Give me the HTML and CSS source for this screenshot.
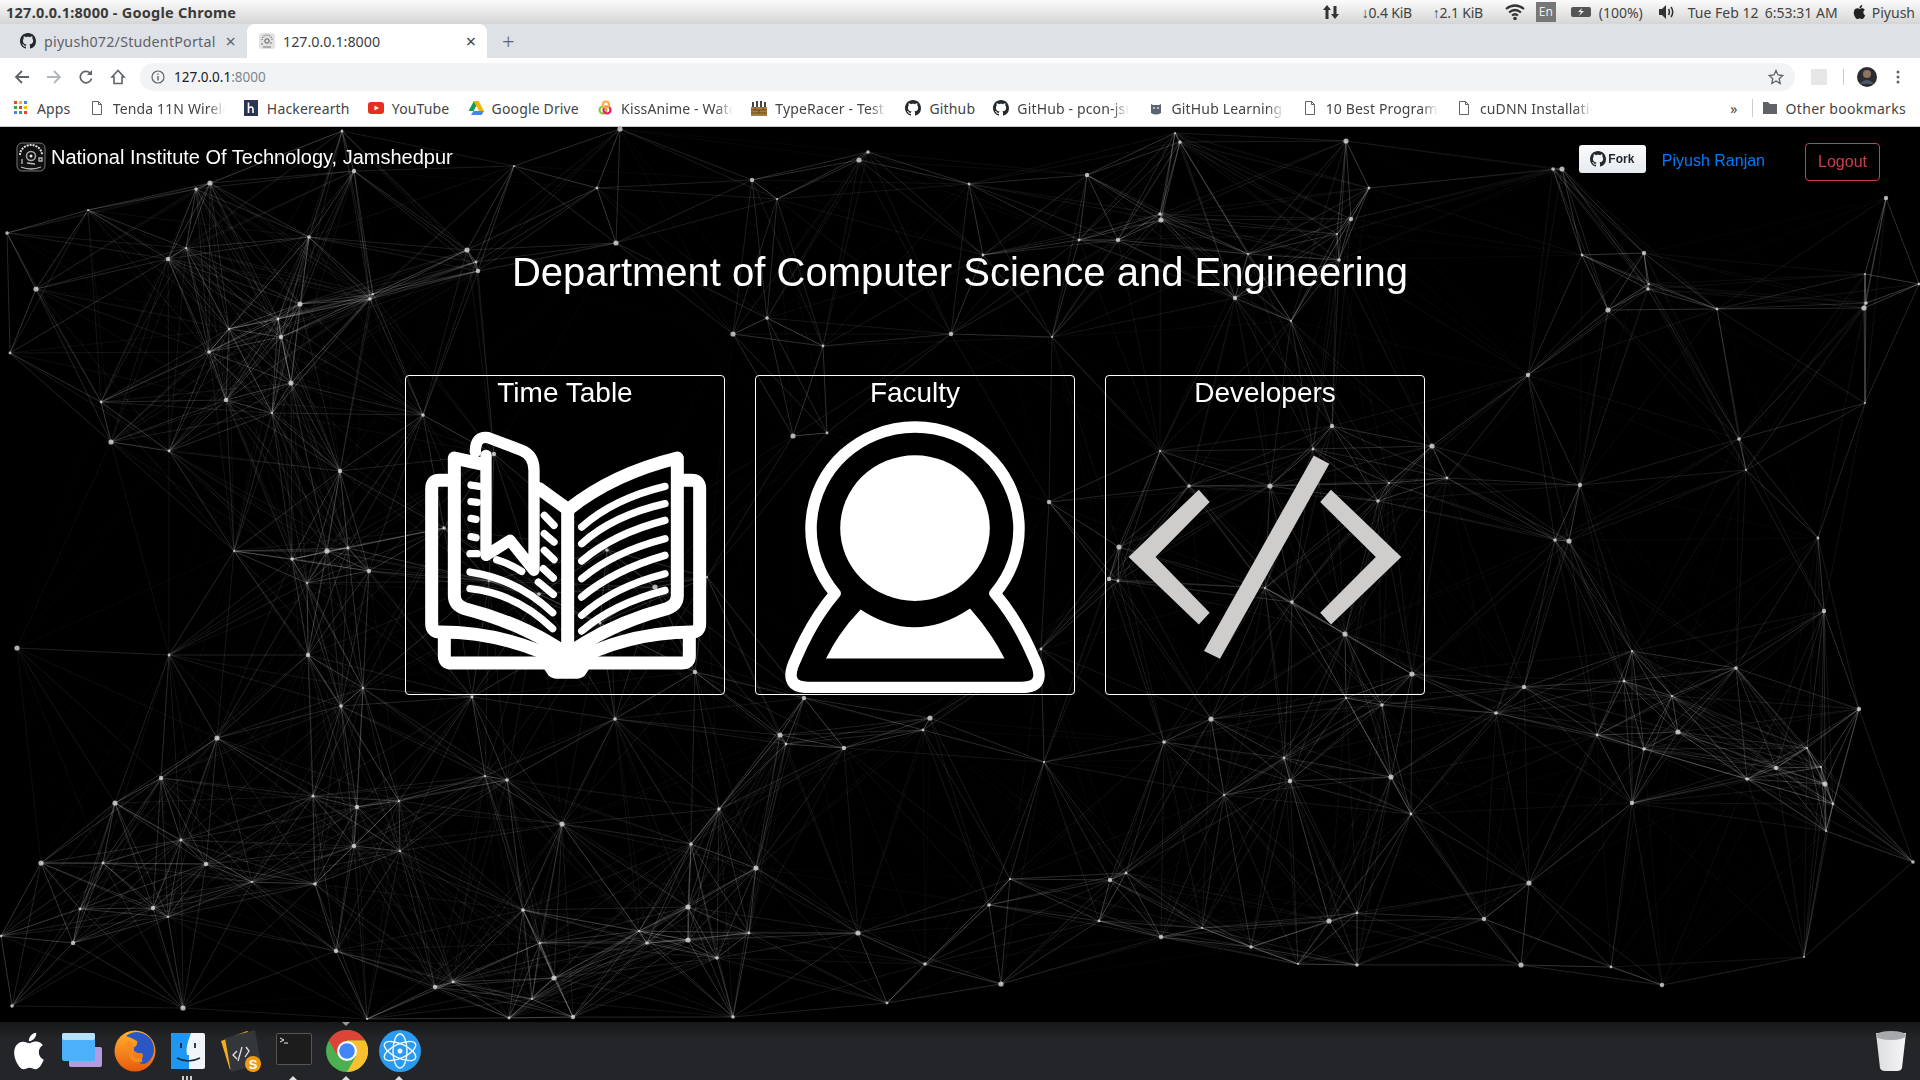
FILE: index.html
```html
<!DOCTYPE html>
<html lang="en">

<head>
    <meta charset="UTF-8">
    <title>National Institute Of Technology, Jamshedpur</title>
    <link rel="stylesheet" href="styles.css">
</head>

<body>
    <svg class="defs" width="0" height="0">
        <symbol id="gh" viewBox="0 0 16 16">
            <path d="M8 0C3.58 0 0 3.58 0 8c0 3.54 2.29 6.53 5.47 7.59.4.07.55-.17.55-.38 0-.19-.01-.82-.01-1.49-2.01.37-2.53-.49-2.69-.94-.09-.23-.48-.94-.82-1.13-.28-.15-.68-.52-.01-.53.63-.01 1.08.58 1.23.82.72 1.21 1.87.87 2.33.66.07-.52.28-.87.51-1.07-1.78-.2-3.64-.89-3.64-3.95 0-.87.31-1.59.82-2.15-.08-.2-.36-1.02.08-2.12 0 0 .67-.21 2.2.82.64-.18 1.32-.27 2-.27.68 0 1.36.09 2 .27 1.53-1.04 2.2-.82 2.2-.82.44 1.1.16 1.92.08 2.12.51.56.82 1.27.82 2.15 0 3.07-1.87 3.75-3.65 3.95.29.25.54.73.54 1.48 0 1.07-.01 1.93-.01 2.2 0 .21.15.46.55.38A8.013 8.013 0 0016 8c0-4.42-3.58-8-8-8z"/>
        </symbol>
        <symbol id="apple" viewBox="0 0 24 24">
            <path d="M18.71 19.5c-.83 1.24-1.71 2.45-3.05 2.47-1.34.03-1.77-.79-3.29-.79-1.53 0-2 .77-3.27.82-1.31.05-2.3-1.32-3.14-2.53C4.25 17 2.94 12.45 4.7 9.39c.87-1.52 2.43-2.48 4.12-2.51 1.28-.02 2.5.87 3.29.87.78 0 2.26-1.07 3.81-.91.65.03 2.47.26 3.64 1.98-.09.06-2.17 1.28-2.15 3.81.03 3.02 2.65 4.03 2.68 4.04-.03.07-.42 1.44-1.38 2.83M13 3.5c.73-.83 1.94-1.46 2.94-1.5.13 1.17-.34 2.35-1.04 3.19-.69.85-1.83 1.51-2.95 1.42-.15-1.15.41-2.35 1.05-3.11z"/>
        </symbol>
        <symbol id="file" viewBox="0 0 16 16">
            <path d="M3.5 1.5h6l3 3v10h-9z M9.5 1.5v3h3" fill="none" stroke="#5f6368" stroke-width="1"/>
        </symbol>
        <symbol id="emblem" viewBox="0 0 30 30">
            <rect x="1" y="1" width="28" height="28" rx="5" fill="#111" stroke="#777"/>
            <path d="M4 13a11 10 0 0 1 22 0" fill="none" stroke="#ddd" stroke-width="2" stroke-dasharray="2 1"/>
            <circle cx="15" cy="14" r="4.5" fill="none" stroke="#aaa" stroke-width="1.5"/>
            <circle cx="15" cy="14" r="1.5" fill="#eee"/>
            <path d="M6 17v5M23 16h3v3h-3zM11 21l8 1M5 25q10 4 20 0" fill="none" stroke="#bbb" stroke-width="1.3"/>
        </symbol>
        <symbol id="favicon" viewBox="0 0 16 16">
            <rect width="16" height="16" rx="3" fill="#e2e2e2"/>
            <path d="M3 7a5 5 0 0 1 10 0" fill="none" stroke="#666" stroke-width="1.2" stroke-dasharray="1 1"/>
            <circle cx="8" cy="8" r="2.200" fill="none" stroke="#555"/>
            <path d="M3 10v2M12 9v2M4 14h8" stroke="#777"/>
        </symbol>
    </svg>

    <!-- ubuntu top bar -->
    <div class="os-bar">
        <span class="os-title">127.0.0.1:8000 - Google Chrome</span>
        <div class="os-status">
            <svg class="s-arrows" width="18" height="18" viewBox="0 0 18 18"><path d="M5 2l4 5H6.500v9h-3V7H1zM13 16l4-5h-2.500V3h-3v8H9z" fill="#333"/></svg>
            <span class="s-net">↓0.4 KiB</span>
            <span class="s-net">↑2.1 KiB</span>
            <svg width="22" height="18" viewBox="0 0 22 18"><path d="M2 6q9-7 18 0M5 9.500q6-5 12 0M8 12.500q3-2.500 6 0" fill="none" stroke="#333" stroke-width="2.200"/><circle cx="11" cy="15.500" r="1.800" fill="#333"/></svg>
            <span class="s-lang">En</span>
            <svg class="s-batt" width="20" height="14" viewBox="0 0 20 14"><rect x="0" y="2" width="20" height="10" rx="2" fill="#555"/><path d="M11 3l-4 4h3l-2 4 5-5h-3z" fill="#eee"/></svg>
            <span class="s-pct">(100%)</span>
            <svg width="18" height="18" viewBox="0 0 18 18"><path d="M1 6h3l4-4v14l-4-4H1z" fill="#333"/><path d="M10.500 6q2 3 0 6M13 4q3.500 5 0 10" fill="none" stroke="#333" stroke-width="1.500"/></svg>
            <span class="s-date">Tue Feb 12</span>
            <span class="s-time">6:53:31 AM</span>
            <svg class="s-apple" width="17" height="18" fill="#222"><use href="#apple"/></svg>
            <span>Piyush</span>
        </div>
    </div>

    <!-- tab strip -->
    <div class="tabs">
        <div class="tab">
            <svg width="16" height="16" fill="#24292e"><use href="#gh"/></svg>
            <span class="tab-text">piyush072/StudentPortal</span>
            <span class="tab-x">×</span>
        </div>
        <div class="tab tab-active">
            <svg width="16" height="16"><use href="#favicon"/></svg>
            <span class="tab-text">127.0.0.1:8000</span>
            <span class="tab-x">×</span>
        </div>
        <span class="tab-new">+</span>
    </div>

    <!-- address bar -->
    <div class="toolbar">
        <svg class="tb-btn" width="16" height="16" viewBox="0 0 16 16"><path d="M15 8H2M8 2L2 8l6 6" fill="none" stroke="#5f6368" stroke-width="1.800"/></svg>
        <svg class="tb-btn" width="16" height="16" viewBox="0 0 16 16"><path d="M1 8h13M8 2l6 6-6 6" fill="none" stroke="#b3b6ba" stroke-width="1.800"/></svg>
        <svg class="tb-btn" width="16" height="16" viewBox="0 0 16 16"><path d="M13.500 9.500A5.700 5.700 0 1 1 12 4" fill="none" stroke="#5f6368" stroke-width="1.700"/><path d="M14 1v5H9z" fill="#5f6368"/></svg>
        <svg class="tb-btn" width="16" height="16" viewBox="0 0 16 16"><path d="M8 1.500L2 8h2v6.500h8V8h2z" fill="none" stroke="#5f6368" stroke-width="1.600"/></svg>
        <div class="omnibox">
            <svg width="14" height="14" viewBox="0 0 14 14"><circle cx="7" cy="7" r="6" fill="none" stroke="#5f6368" stroke-width="1.200"/><path d="M7 6v4.500M7 3.500v1.300" stroke="#5f6368" stroke-width="1.400"/></svg>
            <span class="url">127.0.0.1<span class="url-port">:8000</span></span>
            <svg class="star" width="16" height="16" viewBox="0 0 16 16"><path d="M8 1.500l2 4.500 4.800.5-3.600 3.200 1 4.800L8 12l-4.200 2.500 1-4.800L1.200 6.500 6 6z" fill="none" stroke="#5f6368" stroke-width="1.300"/></svg>
        </div>
        <span class="ext-box"></span>
        <span class="tb-sep"></span>
        <svg class="avatar" width="20" height="20" viewBox="0 0 20 20"><circle cx="10" cy="10" r="10" fill="#2c2c30"/><circle cx="10" cy="7" r="4" fill="#8c7460"/><path d="M3 17q7-8 14 0" fill="#49586b"/></svg>
        <svg class="tb-menu" width="4" height="14" viewBox="0 0 4 14"><circle cx="2" cy="2" r="1.500" fill="#5f6368"/><circle cx="2" cy="7" r="1.500" fill="#5f6368"/><circle cx="2" cy="12" r="1.500" fill="#5f6368"/></svg>
    </div>

    <!-- bookmarks -->
    <div class="bookmarks">
        <div class="bm bm-apps">
            <svg width="16" height="16" viewBox="0 0 16 16">
                <path d="M1 1h3v3H1z" fill="#ea4335"/><path d="M6 1h3v3H6z" fill="#fbbc05"/><path d="M11 1h3v3h-3z" fill="#4285f4"/>
                <path d="M1 6h3v3H1z" fill="#34a853"/><path d="M6 6h3v3H6z" fill="#ea4335"/><path d="M11 6h3v3h-3z" fill="#fbbc05"/>
                <path d="M1 11h3v3H1z" fill="#4285f4"/><path d="M6 11h3v3H6z" fill="#34a853"/><path d="M11 11h3v3h-3z" fill="#ea4335"/>
            </svg>
            <span>Apps</span>
        </div>
        <div class="bm"><svg width="16" height="16"><use href="#file"/></svg><span class="bm-cut">Tenda 11N Wireless</span></div>
        <div class="bm">
            <svg width="16" height="16" viewBox="0 0 16 16"><rect x="1" width="14" height="16" fill="#2c3454"/><path d="M5.500 2.500V13M5.500 8q4-2.500 4.500 1V13" fill="none" stroke="#fff" stroke-width="1.600"/></svg>
            <span>Hackerearth</span>
        </div>
        <div class="bm">
            <svg width="16" height="16" viewBox="0 0 16 16"><rect y="2" width="16" height="12" rx="3" fill="#e62d1f"/><path d="M6.500 5.500v5L11 8z" fill="#fff"/></svg>
            <span>YouTube</span>
        </div>
        <div class="bm">
            <svg width="16" height="16" viewBox="0 0 16 16"><path d="M5.500 1h5L5 11H0z" fill="#0f9d58" transform="translate(.5 0)"/><path d="M10.500 1L16 11h-5L5.500 1z" fill="#f4b400"/><path d="M3 15l2.500-4H16l-2.500 4z" fill="#4285f4"/></svg>
            <span>Google Drive</span>
        </div>
        <div class="bm">
            <svg width="16" height="16" viewBox="0 0 16 16"><circle cx="6" cy="10" r="3.500" fill="none" stroke="#8cc63f" stroke-width="2.200"/><circle cx="10" cy="10" r="3.500" fill="none" stroke="#e91e63" stroke-width="2.200"/><circle cx="9" cy="4.500" r="3" fill="none" stroke="#fbb03b" stroke-width="2.200"/></svg>
            <span class="bm-cut">KissAnime - Watch</span>
        </div>
        <div class="bm">
            <svg width="16" height="16" viewBox="0 0 16 16"><rect y="7" width="16" height="9" fill="#a97b3c"/><path d="M0 10h16M0 13h16M4 7v3M8 10v3M12 7v3" stroke="#5c4018" stroke-width=".8"/><path d="M2 7V2M6 7V1M10 7V1M14 7V2" stroke="#444" stroke-width="2"/></svg>
            <span class="bm-cut">TypeRacer - Test your</span>
        </div>
        <div class="bm"><svg width="16" height="16" fill="#24292e"><use href="#gh"/></svg><span>Github</span></div>
        <div class="bm"><svg width="16" height="16" fill="#24292e"><use href="#gh"/></svg><span class="bm-cut">GitHub - pcon-jsr</span></div>
        <div class="bm">
            <svg width="16" height="16" viewBox="0 0 16 16"><path d="M3 4l2 1h6l2-1v9q-5 3-10 0z" fill="#5b6472"/><circle cx="6" cy="8" r="1" fill="#ddd"/><circle cx="10" cy="8" r="1" fill="#ddd"/></svg>
            <span class="bm-cut">GitHub Learning Lab</span>
        </div>
        <div class="bm"><svg width="16" height="16"><use href="#file"/></svg><span class="bm-cut">10 Best Programming</span></div>
        <div class="bm"><svg width="16" height="16"><use href="#file"/></svg><span class="bm-cut">cuDNN Installation</span></div>
        <div class="bm-right">
            <span class="bm-more">»</span>
            <span class="bm-sep"></span>
            <div class="bm bm-other">
                <svg width="16" height="16" viewBox="0 0 16 16"><path d="M1 2h5l2 2h7v10H1z" fill="#5f6368"/></svg>
                <span>Other bookmarks</span>
            </div>
        </div>
    </div>

    <!-- the page itself -->
    <div class="page">
        <canvas id="particles" width="1920" height="895"></canvas>
        <div class="content">
            <nav class="nav">
                <a class="brand">
                    <svg width="30" height="30"><use href="#emblem"/></svg>
                    <span>National Institute Of Technology, Jamshedpur</span>
                </a>
                <div class="nav-right">
                    <a class="fork"><svg width="16" height="16" fill="#24292e"><use href="#gh"/></svg>Fork</a>
                    <a class="user">Piyush Ranjan</a>
                    <a class="logout">Logout</a>
                </div>
            </nav>
            <h1 class="heading">Department of Computer Science and Engineering</h1>
            <div class="cards">
                <div class="card">
                    <h3>Time Table</h3>
                    <svg class="card-icon" viewBox="18 119 954 850" fill="none" stroke="#fff" stroke-linecap="round" stroke-linejoin="round">
                        <g stroke-width="39">
                            <path d="M133 800V858Q133 878 155 878H845Q868 878 868 858V800"/>
                            <path d="M140 330H118Q95 330 95 355V760Q95 785 120 785Q320 785 500 880"/>
                            <path d="M850 330H875Q899 330 899 355V760Q899 785 875 785Q680 785 505 880"/>
                            <path d="M240 280L163 263V675Q163 705 195 715Q370 760 500 850"/>
                            <path d="M505 417Q640 310 832 263V675Q832 705 800 715Q630 760 505 850"/>
                            <path d="M418 355L503 417V860"/>
                        </g>
                        <path d="M410 862H590L555 915Q545 925 530 925H470Q455 925 445 915Z" fill="#fff" stroke="none"/>
                        <path d="M226 245Q226 195 265 202L365 240Q402 255 402 300V600L330 510L258 555V255" stroke-width="34"/>
                        <g stroke-width="22">
                            <path d="M213 344L238 348M213 394L232 396M213 444L228 447M213 499L228 502M210 550L232 550"/>
                            <path d="M290 568Q330 580 365 603M210 605Q350 625 458 727M210 655Q350 670 458 775"/>
                            <path d="M433 435L462 465M433 490L462 515M433 540L462 568M430 595L460 623M415 635L460 672"/>
                            <path d="M545 470Q640 385 795 348M545 520Q640 435 795 400M545 572Q640 490 795 450M545 625Q640 545 795 505M545 680Q640 600 795 555M545 735Q640 650 795 610M545 782Q640 700 795 660"/>
                        </g>
                    </svg>
                </div>
                <div class="card">
                    <h3>Faculty</h3>
                    <svg class="card-icon" viewBox="756 409.600 318 283.400">
                        <path d="M835 593A104 101.500 0 1 1 995 593Q1018 620 1034 658C1042 674 1042 687 1022 687H808C788 687 788 674 796 658Q812 620 835 593Z" fill="#000" stroke="#fff" stroke-width="11.500" stroke-linejoin="round"/>
                        <ellipse cx="915" cy="527.700" rx="74.800" ry="72.800" fill="#fff"/>
                        <path d="M826 658Q840 630 860.600 609Q915 645 970 608Q990 630 1004.500 658Z" fill="#fff"/>
                    </svg>
                </div>
                <div class="card">
                    <h3>Developers</h3>
                    <svg class="card-icon" viewBox="1106 409.600 318 283.400" fill="#cfcccc">
                        <path d="M1198.800 489.300L1209.700 501.700L1155.500 556.700L1209.700 612.300L1198.800 624L1128.600 556.700Z"/>
                        <path d="M1331 489.300L1320.200 501.700L1375.800 556.700L1320.200 612.300L1331 624L1401.300 556.700Z"/>
                        <path d="M1313.700 455L1329.300 463.300L1220 658.300L1204 650.700Z"/>
                    </svg>
                </div>
            </div>
        </div>
    </div>

    <!-- dock -->
    <div class="dock">
        <svg class="dock-icon" viewBox="2.500 .5 19 23" fill="#fff"><use href="#apple" width="24" height="24"/></svg>
        <svg class="dock-icon" viewBox="0 0 42 42">
            <rect x="8" y="17" width="33" height="20" rx="2" fill="#b49ae0"/>
            <rect x="1" y="3" width="33" height="28" rx="2" fill="#4db0fb"/>
            <rect x="1" y="3" width="33" height="7" rx="2" fill="#b9e0fb"/>
        </svg>
        <svg class="dock-icon" viewBox="0 0 42 42">
            <defs><linearGradient id="ffx" x1="0" y1="0" x2="0" y2="1"><stop offset="0" stop-color="#ffb52e"/><stop offset="1" stop-color="#e8590c"/></linearGradient></defs>
            <circle cx="21" cy="21" r="20.500" fill="url(#ffx)"/>
            <path d="M12 6Q24-3 36 8Q44 20 36 30Q30 37 24 32Q31 28 28 23Q20 24 19 18Q24 16 23 11Q18 8 12 6Z" fill="#2b57c4"/>
            <path d="M14 12Q20 18 17 24Q18 32 28 30" fill="none" stroke="#f58a1f" stroke-width="4"/>
        </svg>
        <svg class="dock-icon" viewBox="0 0 42 42">
            <rect x="4" y="3" width="34" height="36" rx="2" fill="#f1f4f8"/>
            <path d="M6 3H24Q18 18 20 25H22V39H6Q4 39 4 37V5Q4 3 6 3Z" fill="#1f97f0"/>
            <path d="M14 13v5M28 13v5" stroke="#1b2b3a" stroke-width="1.800"/>
            <path d="M10 28Q21 34 33 28" fill="none" stroke="#1b2b3a" stroke-width="1.500"/>
        </svg>
        <svg class="dock-icon" viewBox="0 0 42 42">
            <path d="M1 11L27 1L32 4L10 40Z" fill="#f0b020"/>
            <path d="M5 8L35 0L41 34L11 42Z" fill="#33363b"/>
            <path d="M17 21L13 25L17 29M26 17L29 21L25 27M22 17L18 31" fill="none" stroke="#e4e4e4" stroke-width="1.300"/>
            <circle cx="33" cy="34" r="8" fill="#f39c12"/>
            <text x="33" y="38.500" class="dock-s">S</text>
        </svg>
        <svg class="dock-icon" viewBox="0 0 42 42">
            <rect x="3.500" y="3.500" width="35" height="31" rx="1.500" fill="#1c1c1c" stroke="#555"/>
            <path d="M7 8L11 10L7 12" fill="none" stroke="#eee"/>
            <path d="M11 13H15" stroke="#eee"/>
        </svg>
        <svg class="dock-icon" viewBox="0 0 42 42">
            <circle cx="21" cy="21" r="21" fill="#4caf50"/>
            <path d="M2.800 10.500A21 21 0 0 1 39.200 10.500H21L11.900 26.200Z" fill="#db4437"/>
            <path d="M39.200 10.500A21 21 0 0 1 21 42L30.100 26.200L21 10.500Z" fill="#fbc02d"/>
            <circle cx="21" cy="21" r="10" fill="#fff"/>
            <circle cx="21" cy="21" r="7.800" fill="#4285f4"/>
        </svg>
        <svg class="dock-icon" viewBox="0 0 42 42">
            <circle cx="21" cy="21" r="21" fill="#2b9bf0"/>
            <g fill="none" stroke="#f2f8ff" stroke-width="1.400">
                <ellipse cx="21" cy="21" rx="17" ry="7" transform="rotate(25 21 21)"/>
                <ellipse cx="21" cy="21" rx="17" ry="7" transform="rotate(-25 21 21)"/>
                <ellipse cx="21" cy="21" rx="17" ry="7" transform="rotate(90 21 21)"/>
            </g>
            <circle cx="21" cy="21" r="2.500" fill="#f2f8ff"/>
        </svg>
        <svg class="dock-icon dock-trash" viewBox="0 0 42 42">
            <defs><linearGradient id="trash" x1="0" y1="0" x2="1" y2="0"><stop offset="0" stop-color="#dcdde0"/><stop offset="1" stop-color="#f6f6f7"/></linearGradient></defs>
            <path d="M6 3H36L32 38Q31 41 27 41H15Q11 41 10 38Z" fill="url(#trash)"/>
            <ellipse cx="21" cy="5.500" rx="15" ry="4.500" fill="#a7a9ac"/>
        </svg>
        <span class="tri tri-top"></span>
        <span class="tri tri-term"></span>
        <span class="tri tri-chrome"></span>
        <span class="tri tri-atom"></span>
        <span class="dots"><i></i><i></i><i></i></span>
    </div>

    <script src="particles.js"></script>
</body>

</html>
```

FILE: styles.css
```css
* {
    margin: 0;
    padding: 0;
    box-sizing: border-box;
}

html, body {
    height: 1080px;
    overflow: hidden;
}

body {
    display: flex;
    flex-direction: column;
    background: #000;
    font-family: "Noto Sans", "Liberation Sans", sans-serif;
}

.defs {
    position: absolute;
}

/* os bar */
.os-bar {
    height: 24px;
    flex: none;
    display: flex;
    align-items: center;
    justify-content: space-between;
    padding: 0 5px 0 6px;
    background: linear-gradient(#fbfbfb, #d5d5d5);
    font-size: 14px;
    color: #444;
}

.os-title {
    font-size: 14.5px;
    font-weight: 700;
    letter-spacing: .25px;
    color: #3a3a3a;
}

.os-status {
    display: flex;
    align-items: center;
    white-space: nowrap;
}

.s-arrows { margin-right: 22px; }
.s-net { width: 71px; letter-spacing: -.2px; }
.os-status svg { flex: none; }
.s-lang {
    width: 20px;
    height: 20px;
    margin: 0 15px 0 10px;
    background: #777;
    color: #eee;
    font-size: 12px;
    line-height: 20px;
    text-align: center;
}
.s-batt { margin-right: 8px; }
.s-pct { width: 59px; }
.s-date { width: 77px; margin-left: 12px; }
.s-time { width: 86px; }
.s-apple { margin-right: 4px; }

/* tabs */
.tabs {
    height: 34px;
    flex: none;
    display: flex;
    align-items: center;
    background: #dee1e6;
    font-size: 14.3px;
    color: #5f6368;
}

.tab {
    width: 247px;
    height: 34px;
    display: flex;
    align-items: center;
    gap: 8px;
    padding: 0 11px 0 20px;
    letter-spacing: .2px;
}

.tab-active {
    width: 240px;
    padding-left: 12px;
    background: #fff;
    border-radius: 8px 8px 0 0;
    color: #3c4043;
    letter-spacing: 0;
}

.tab-text {
    flex: 1;
    white-space: nowrap;
}

.tab-x {
    font-size: 18px;
    line-height: 1;
}

.tab-new {
    margin-left: 15px;
    font-size: 22px;
    font-weight: 300;
    line-height: 1;
}

/* toolbar */
.toolbar {
    height: 34px;
    flex: none;
    display: flex;
    align-items: center;
    padding: 4px 0 0 14px;
    background: #fff;
}

.tb-btn {
    margin-right: 16px;
    flex: none;
}

.omnibox {
    width: 1655px;
    height: 28px;
    margin-left: -2px;
    display: flex;
    align-items: center;
    gap: 9px;
    padding: 0 11px;
    background: #f1f3f4;
    border-radius: 14px;
    font-size: 13.5px;
}

.url {
    flex: 1;
    color: #202124;
}

.url-port {
    color: #80868b;
}

.ext-box {
    width: 16px;
    height: 16px;
    margin-left: 16px;
    background: #e6e6e6;
}

.tb-sep {
    width: 1px;
    height: 16px;
    margin: 0 13px 0 16px;
    background: #ccc;
}

.tb-menu {
    margin-left: 19px;
}

/* bookmarks */
.bookmarks {
    height: 35px;
    flex: none;
    display: flex;
    align-items: center;
    padding: 0 14px 2px 13px;
    background: #fff;
    border-bottom: 1px solid #c9c9c9;
    font-size: 14px;
    letter-spacing: .15px;
    color: #444;
    white-space: nowrap;
}

.bm {
    display: flex;
    align-items: center;
    gap: 8px;
    margin-right: 18.2px;
}

.bm svg { flex: none; }

.bm-cut {
    width: 112px;
    overflow: hidden;
    -webkit-mask-image: linear-gradient(90deg, #000 85%, transparent);
    mask-image: linear-gradient(90deg, #000 85%, transparent);
}

.bm-right {
    display: flex;
    align-items: center;
    margin-left: auto;
}

.bm-more {
    margin-right: 14px;
    font-size: 14px;
}

.bm-sep {
    width: 1px;
    height: 18px;
    margin-right: 9px;
    background: #ccc;
}

.bm-other {
    margin-right: 0;
    letter-spacing: .3px;
}

/* page */
.page {
    flex: 1;
    position: relative;
    background: #000;
    color: #fff;
    font-family: "Liberation Sans", Arial, sans-serif;
}

#particles {
    position: absolute;
    left: 0;
    top: 0;
}

.content {
    position: relative;
}

.nav {
    display: flex;
    justify-content: space-between;
    padding: 15px 40px 0 16px;
}

.brand {
    display: flex;
    align-items: center;
    gap: 5px;
    height: 30px;
    font-size: 20px;
}

.nav-right {
    display: flex;
    align-items: flex-start;
}

.fork {
    display: flex;
    align-items: center;
    justify-content: center;
    gap: 2px;
    width: 67px;
    height: 28px;
    margin-top: 3px;
    background: linear-gradient(#fafbfc, #e6ebf1);
    border-radius: 3px;
    color: #24292e;
    font-size: 12px;
    font-weight: 700;
}

.user {
    margin: 7px 40px 0 16px;
    color: #007bff;
    font-size: 16px;
    line-height: 24px;
}

.logout {
    width: 75px;
    height: 38px;
    margin-top: 1px;
    border: 1px solid #c9404c;
    border-radius: 4px;
    color: #c9404c;
    font-size: 16px;
    line-height: 36px;
    text-align: center;
}

.heading {
    margin-top: 67px;
    font-size: 40px;
    font-weight: 400;
    line-height: 48px;
    text-align: center;
}

.cards {
    display: flex;
    gap: 30px;
    margin: 79px 0 0 405px;
}

.card {
    width: 320px;
    height: 320px;
    display: flex;
    flex-direction: column;
    border: 1px solid #fff;
    border-radius: 4px;
}

.card h3 {
    font-size: 28px;
    font-weight: 400;
    line-height: 33.6px;
    text-align: center;
}

.card-icon {
    width: 318px;
    height: 283.4px;
}

/* dock */
.dock {
    height: 58px;
    flex: none;
    position: relative;
    display: flex;
    align-items: flex-start;
    gap: 11px;
    padding: 8px;
    background: linear-gradient(#17181a, #232528 30%);
}

.dock-icon {
    width: 42px;
    height: 42px;
    flex: none;
}

.dock-trash {
    margin-left: auto;
}

.dock-s {
    fill: #fff;
    font: 700 13px "Liberation Sans", sans-serif;
    text-anchor: middle;
}

.tri {
    position: absolute;
    width: 0;
    height: 0;
    border-left: 4px solid transparent;
    border-right: 4px solid transparent;
}

.tri-top { left: 342px; top: 0; border-top: 4px solid #999; }
.tri-term { left: 289px; bottom: 0; border-bottom: 4px solid #ddd; }
.tri-chrome { left: 342px; bottom: 0; border-bottom: 4px solid #ddd; }
.tri-atom { left: 395px; bottom: 0; border-bottom: 4px solid #ddd; }

.dots {
    position: absolute;
    left: 182px;
    bottom: 0;
    display: flex;
    gap: 2px;
}

.dots i {
    width: 2px;
    height: 4px;
    background: #ccc;
}
```

FILE: particles.js
```js
// positions of the dots, in window pixels
var nodes = [
    [88,210],[196,189],[210,183],[342,131],[354,171],[514,166],[7,233],[36,289],[10,353],[168,259],[186,248],[309,237],
    [467,250],[476,262],[478,271],[373,294],[370,299],[300,304],[278,319],[281,337],[229,329],[209,352],[291,383],[101,402],
    [226,400],[272,413],[423,415],[111,442],[169,451],[340,471],[234,551],[292,559],[327,551],[348,548],[369,571],[307,583],
    [444,528],[17,648],[169,655],[308,655],[363,688],[341,706],[217,738],[472,697],[494,454],[489,581],[615,719],[780,735],
    [786,744],[161,778],[485,776],[507,780],[115,803],[313,796],[357,807],[399,801],[719,809],[562,824],[181,840],[354,846],
    [400,851],[691,844],[41,863],[103,863],[206,864],[252,882],[315,884],[756,868],[80,909],[153,908],[168,917],[523,910],
    [688,907],[1,936],[73,943],[639,931],[647,943],[688,940],[749,933],[336,951],[540,943],[717,958],[554,978],[453,982],
    [435,987],[532,999],[12,1006],[183,1008],[509,1018],[573,1017],[367,1019],[733,1017],
    [620,129],[597,188],[752,180],[777,199],[868,152],[859,160],[969,184],[1087,175],[1175,133],[1180,142],[1346,141],
    [1369,188],[1351,219],[1337,234],[1160,214],[1161,220],[1079,240],[1118,240],[1248,254],[1339,260],[616,243],[983,255],
    [1235,298],[1291,321],[767,318],[733,334],[823,346],[951,334],[1052,337],
    [1553,169],[1562,169],[1582,255],[1644,253],[1649,284],[1648,289],[1608,310],[1717,309],[1528,375],[1865,274],[1866,303],
    [1864,308],[1919,284],[1886,198],[1865,403],[1739,439],
    [1432,446],[1447,478],[1580,485],[1746,470],[1555,540],[1569,541],[1818,538],[1824,611],[1632,651],[1736,668],[1412,674],
    [1624,681],[1524,687],[1672,696],[1496,713],[1678,732],[1597,735],[1859,709],[1807,748],[1644,749],
    [793,436],[827,433],[1049,502],[1160,451],[1189,486],[1270,486],[1313,449],[1332,426],[1389,483],[1378,501],[1119,547],
    [1118,581],[1109,579],[1265,588],[1292,602],[1345,634],[1041,649],[804,698],[1346,698],
    [607,550],[655,587],[600,623],[695,672],[707,577],[539,594],
    [930,718],[923,730],[844,748],[1044,762],[1164,742],[1211,719],[1284,758],[1290,781],[1224,795],[1382,705],[1391,777],
    [1411,814],[1776,768],[1821,767],[1747,779],[1825,784],[1833,804],[1632,803],[1826,831],[1913,862],[1529,883],[1126,873],
    [1110,880],[1010,879],[989,905],[858,933],[1099,921],[1161,937],[1202,928],[1251,947],[1329,921],[1357,913],[1484,919],
    [1298,964],[1357,965],[1521,965],[1611,967],[1662,985],[1804,957],[925,964],[1001,984],[887,1003]
];

var TOP = 127;
var MAX_DIST = 270;

window.onload = function() {
    var ctx = document.getElementById('particles').getContext('2d');

    ctx.lineWidth = 1;
    for (var i = 0; i < nodes.length; i++) {
        for (var j = i + 1; j < nodes.length; j++) {
            var dx = nodes[i][0] - nodes[j][0];
            var dy = nodes[i][1] - nodes[j][1];
            var d = Math.sqrt(dx * dx + dy * dy);
            if (d > MAX_DIST) continue;
            // close dots get a brighter line
            ctx.strokeStyle = 'rgba(255,255,255,' + (0.28 * (1 - d / MAX_DIST)).toFixed(3) + ')';
            ctx.beginPath();
            ctx.moveTo(nodes[i][0], nodes[i][1] - TOP);
            ctx.lineTo(nodes[j][0], nodes[j][1] - TOP);
            ctx.stroke();
        }
    }

    ctx.fillStyle = 'rgba(215,215,215,.8)';
    nodes.forEach(function(n, i) {
        ctx.beginPath();
        ctx.arc(n[0], n[1] - TOP, 1 + (i * 7 % 5) * 0.4, 0, Math.PI * 2);
        ctx.fill();
    });
};
```
